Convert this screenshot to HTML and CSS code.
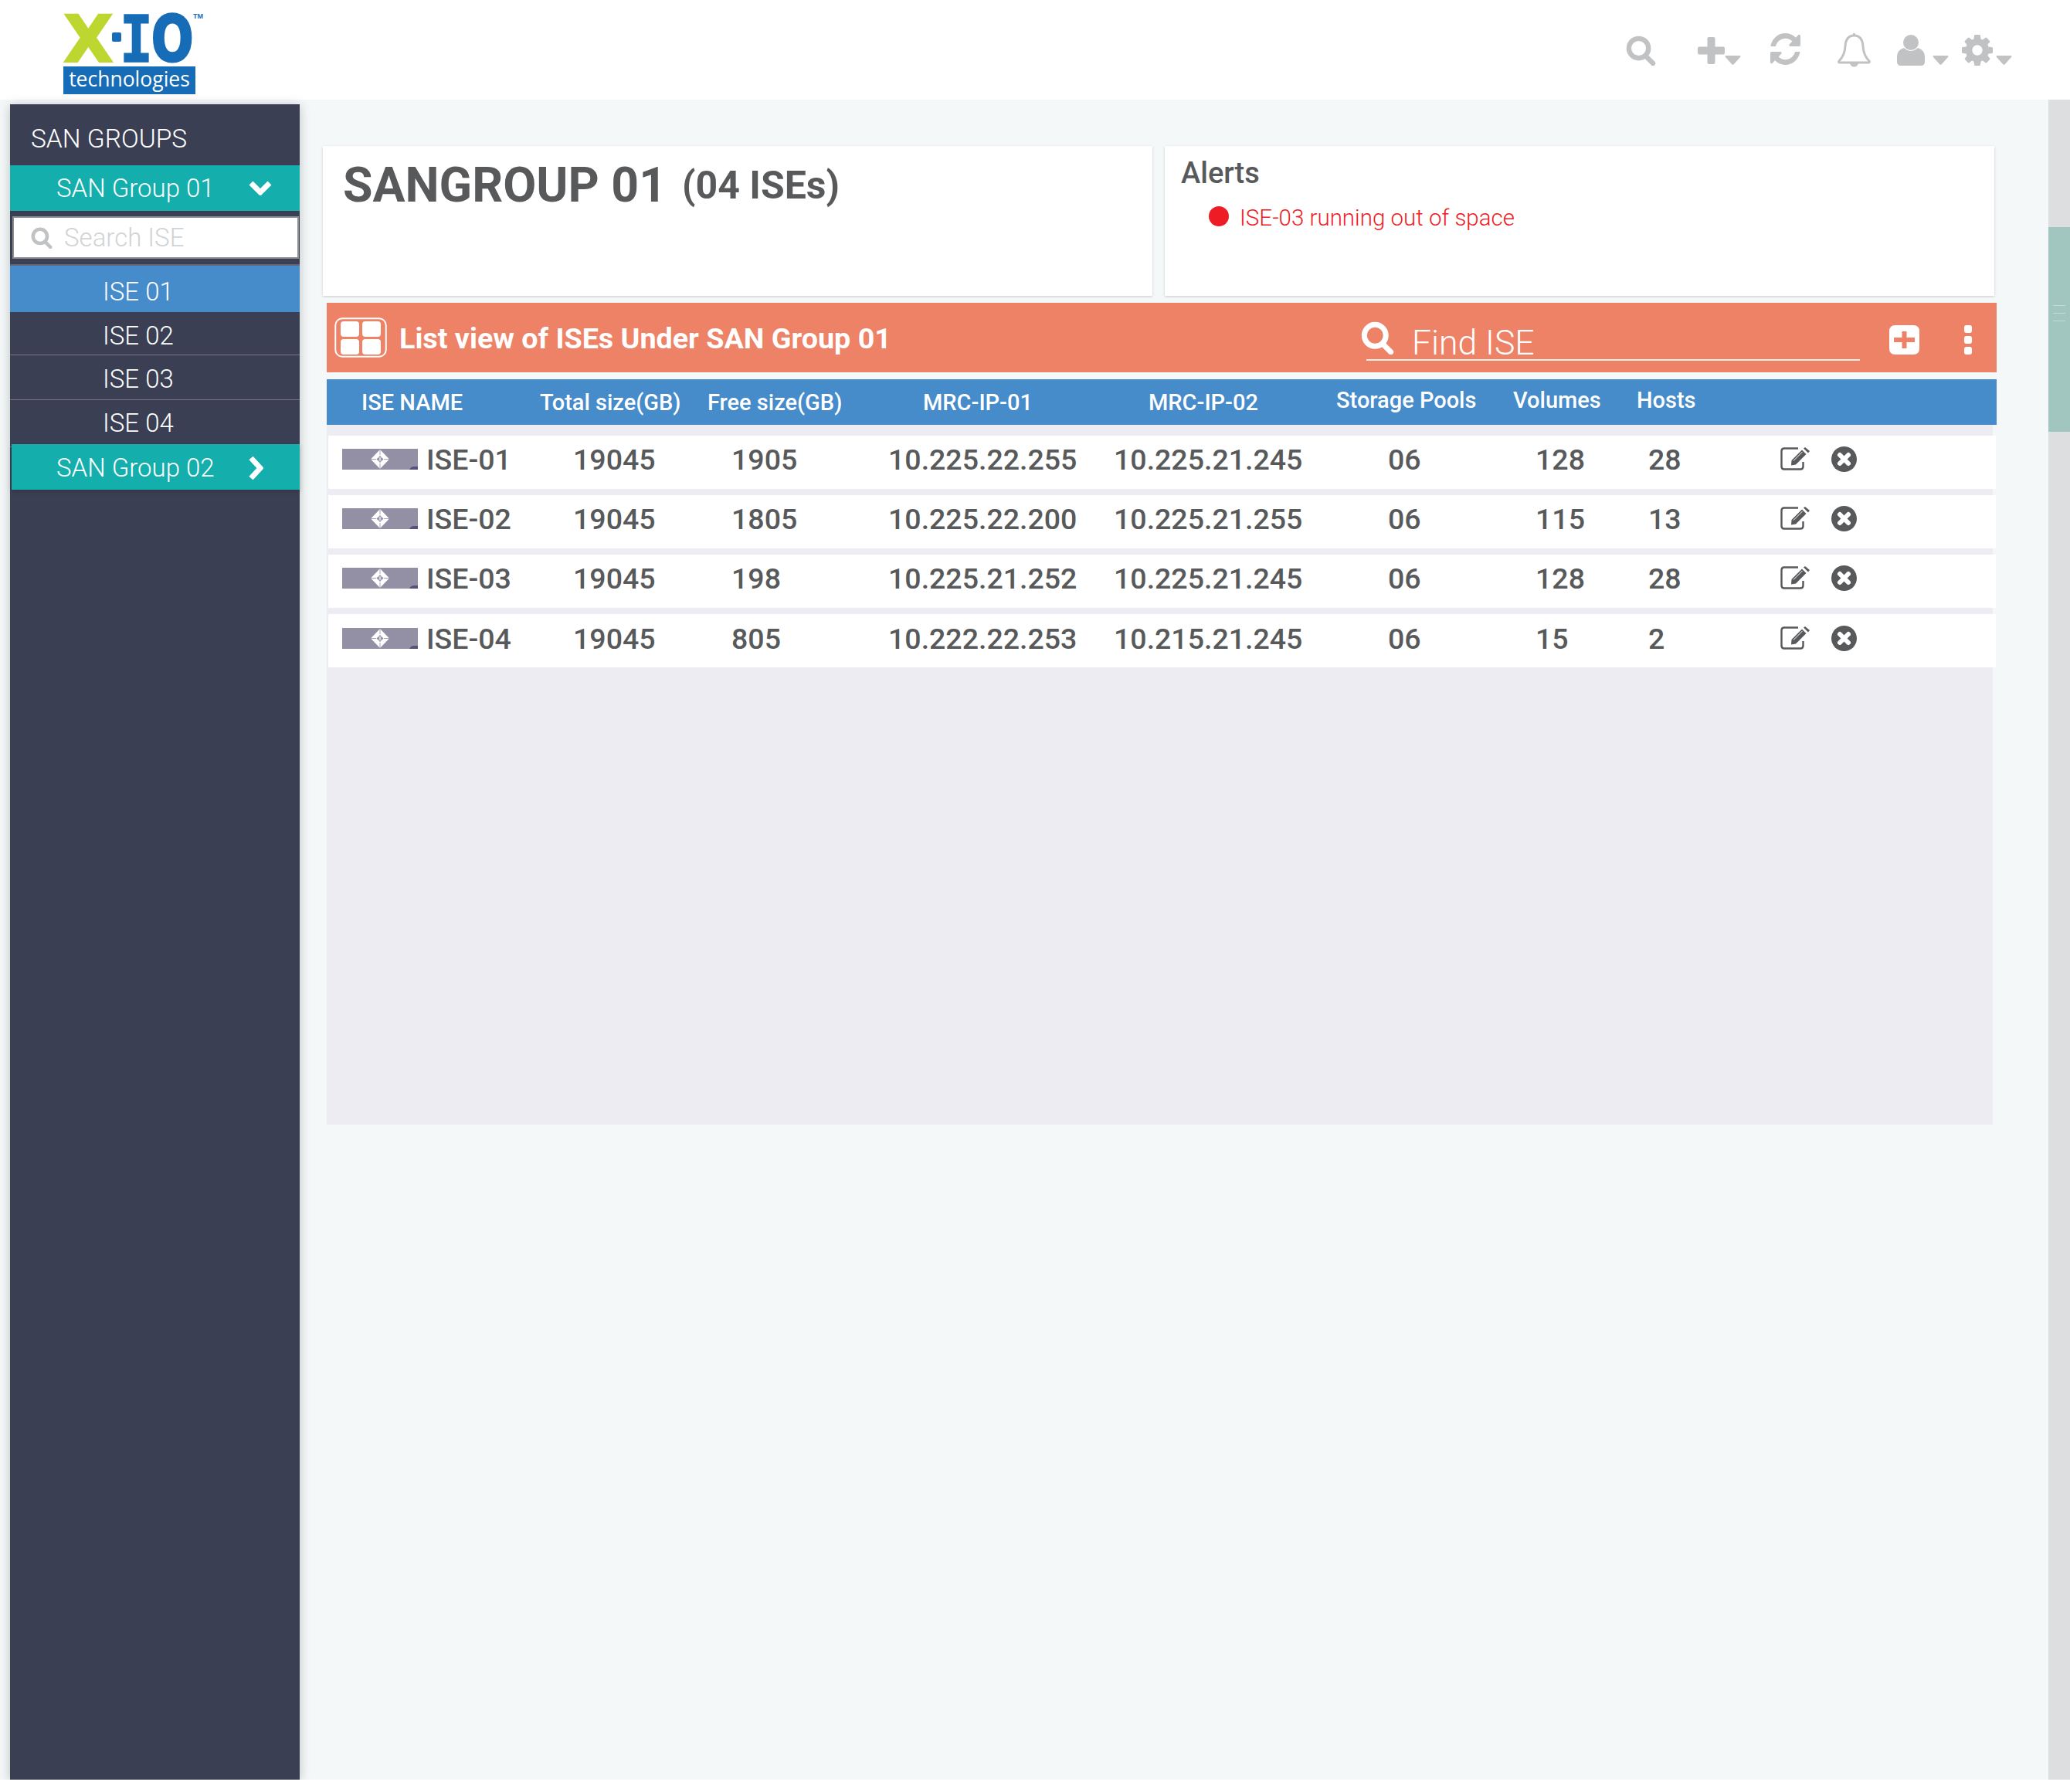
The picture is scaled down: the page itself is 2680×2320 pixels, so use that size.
FILE: index.html
```html
<!DOCTYPE html>
<html lang="en">
<head>
    <meta charset="UTF-8">
    <title>SAN Groups</title>
    <link rel="stylesheet" href="styles.css">
</head>
<body>
<svg class="defs" width="0" height="0">
    <symbol id="i-search" viewBox="0 0 40 40">
        <circle cx="17" cy="17" r="13" fill="none" stroke="currentColor" stroke-width="6.500"/>
        <path d="M26 27 L36 37" stroke="currentColor" stroke-width="6.500" stroke-linecap="round"/>
    </symbol>
    <symbol id="i-caret" viewBox="0 0 21 12">
        <path d="M1 0 H20 Q21 0 20 2 L11.5 11.5 Q10.5 12 9.5 11.5 L1 2 Q0 0 1 0 Z" fill="currentColor"/>
    </symbol>
    <symbol id="i-edit" viewBox="0 0 38 30">
        <path d="M23 1.5 H5 Q1.5 1.5 1.5 5 V25 Q1.5 28.5 5 28.5 H26 Q29.5 28.5 29.5 25 V19" fill="none" stroke="currentColor" stroke-width="2.400"/>
        <path d="M14 23.5 L14.5 17 L28 3.5 L33.5 9 L20 22.500 Z" fill="currentColor"/>
        <path d="M17 17.5 L28.5 6" stroke="#fff" stroke-width="1"/>
        <path d="M30 1.5 L32 0 L38 5 L36 7.5 Z" fill="currentColor"/>
    </symbol>
    <symbol id="i-close" viewBox="0 0 33 33">
        <circle cx="16.5" cy="16.5" r="16.5" fill="currentColor"/>
        <path d="M11 11 L22 22 M22 11 L11 22" stroke="#fff" stroke-width="6" stroke-linecap="round"/>
    </symbol>
    <symbol id="i-device" viewBox="0 0 98 27">
        <rect width="98" height="27" fill="#9390a5"/>
        <path d="M49 1 L61 13.5 L49 26 L37 13.5 Z" fill="#fff"/>
        <path d="M49 1 V8 M49 19 V26 M37 13.5 H44 M54 13.5 H61" stroke="#9390a5" stroke-width="0.800"/>
        <path d="M49 9 L53.500 13.5 L49 18 L44.500 13.5 Z" fill="#9390a5"/>
        <path d="M47.800 10.500 Q49.300 13.5 47.800 16.500 M50.200 10.500 Q48.700 13.5 50.200 16.500" fill="none" stroke="#fff" stroke-width="0.800"/>
        <path d="M87 27 Q89 23 93 23 H98 V27 Z" fill="#55537a"/>
    </symbol>
</svg>

<div class="page">
    <header class="topbar">
        <div class="logo">
            <svg class="logo-mark" width="180" height="70" viewBox="0 0 180 70">
                <text class="logo-x" transform="translate(0 64)" font-size="84">X</text>
                <rect class="logo-dot" x="63" y="26" width="12" height="12" rx="2"/>
                <text class="logo-i" transform="translate(73 64) scale(0.85 1)" font-size="84">I</text>
                <text class="logo-o" transform="translate(114 63) scale(0.78 1)" font-size="82">O</text>
                <text class="logo-tm" x="168" y="8" font-size="9">TM</text>
            </svg>
            <div class="logo-tag">technologies</div>
        </div>
        <nav class="top-icons">
            <svg class="ti ti-search"><use href="#i-search"/></svg>
            <span class="ti-group ti-plus-wrap">
                <svg class="ti-plus" viewBox="0 0 35 35"><path d="M12.500 2 Q12.500 0 14.500 0 H20.500 Q22.500 0 22.500 2 V12.500 H33 Q35 12.500 35 14.500 V20.500 Q35 22.500 33 22.500 H22.500 V33 Q22.500 35 20.500 35 H14.500 Q12.500 35 12.500 33 V22.500 H2 Q0 22.500 0 20.500 V14.500 Q0 12.500 2 12.500 H12.500 Z" fill="currentColor"/></svg>
                <svg class="caret"><use href="#i-caret"/></svg>
            </span>
            <svg class="ti-refresh" viewBox="0 0 1536 1536" preserveAspectRatio="none"><path fill="currentColor" d="M1511 928q0 5-1 7-64 268-268 434.5t-478 166.5q-146 0-282.5-55t-243.5-157l-129 129q-19 19-45 19t-45-19-19-45v-448q0-26 19-45t45-19h448q26 0 45 19t19 45-19 45l-137 137q71 66 161 102t187 36q134 0 250-65t186-179q11-17 53-117 8-23 30-23h192q13 0 22.5 9.5t9.5 22.5zm25-800v448q0 26-19 45t-45 19h-448q-26 0-45-19t-19-45 19-45l138-138q-148-137-349-137-134 0-250 65t-186 179q-11 17-53 117-8 23-30 23h-199q-13 0-22.5-9.5t-9.5-22.5v-7q65-268 270-434.5t480-166.5q146 0 284 55.5t245 156.5l130-129q19-19 45-19t45 19 19 45z"/></svg>
            <svg class="ti-bell" viewBox="0 0 43 47"><path d="M21.5 2 V5 M21.5 5 C13 5 10.500 11 10 19 C9.500 28 7 33 2 38 Q1 40 3 40 H40 Q42 40 41 38 C36 33 33.500 28 33 19 C32.500 11 30 5 21.500 5 Z" fill="none" stroke="currentColor" stroke-width="3"/><path d="M16 40 A5.500 5.500 0 0 0 27 40 Z" fill="currentColor"/></svg>
            <span class="ti-group ti-user-wrap">
                <svg class="ti-user" viewBox="0 0 36 40"><circle cx="18" cy="10" r="10" fill="currentColor"/><path d="M9 17 Q18 25 27 17 Q36 20 36 28 V35 Q36 40 31 40 H5 Q0 40 0 35 V28 Q0 20 9 17 Z" fill="currentColor"/></svg>
                <svg class="caret"><use href="#i-caret"/></svg>
            </span>
            <span class="ti-group ti-gear-wrap">
                <svg class="ti-gear" viewBox="0 0 1536 1536"><path fill="currentColor" d="M1024 768q0-106-75-181t-181-75-181 75-75 181 75 181 181 75 181-75 75-181zm512-109v222q0 12-8 23t-20 13l-185 28q-19 54-39 91 35 50 107 138 10 12 10 25t-9 23q-27 37-99 108t-94 71q-12 0-26-9l-138-108q-44 23-91 38-16 136-29 186-7 28-36 28h-222q-14 0-24.5-8.5t-11.5-21.5l-28-184q-49-16-90-37l-141 107q-10 9-25 9-14 0-25-11-126-114-165-168-7-10-7-23 0-12 8-23 15-21 51-66.5t54-70.5q-27-50-41-99l-183-27q-13-2-21-12.5t-8-23.5v-222q0-12 8-23t19-13l186-28q14-46 39-92-40-57-107-138-10-12-10-24 0-10 9-23 26-36 98.5-107.5t94.5-71.5q13 0 26 10l138 107q44-23 91-38 16-136 29-186 7-28 36-28h222q14 0 24.5 8.5t11.5 21.5l28 184q49 16 90 37l142-107q9-9 24-9 13 0 25 10 129 119 165 170 7 8 7 22 0 12-8 23-15 21-51 66.5t-54 70.5q26 50 41 98l183 28q13 2 21 12.5t8 23.5z"/></svg>
                <svg class="caret"><use href="#i-caret"/></svg>
            </span>
        </nav>
    </header>

    <div class="content">
        <aside class="sidebar">
            <div class="side-title">SAN GROUPS</div>
            <div class="group">
                <span>SAN Group 01</span>
                <svg class="chev-down" viewBox="0 0 30 19"><path d="M3 3 L15 15 L27 3" fill="none" stroke="#fff" stroke-width="7"/></svg>
            </div>
            <div class="side-search">
                <div class="side-search-box">
                    <svg class="side-search-icon"><use href="#i-search"/></svg>
                    <span>Search ISE</span>
                </div>
            </div>
            <ul class="ise-list">
                <li class="active">ISE 01</li>
                <li>ISE 02</li>
                <li>ISE 03</li>
                <li>ISE 04</li>
            </ul>
            <div class="group group-closed">
                <span>SAN Group 02</span>
                <svg class="chev-right" viewBox="0 0 19 30"><path d="M3 2 L15 15 L3 28" fill="none" stroke="#fff" stroke-width="7"/></svg>
            </div>
        </aside>

        <main class="main">
            <div class="cards">
                <section class="card card-title">
                    <h1>SANGROUP 01</h1>
                    <span class="count">(04 ISEs)</span>
                </section>
                <section class="card card-alerts">
                    <h2>Alerts</h2>
                    <div class="alert-line"><span class="dot"></span>ISE-03 running out of space</div>
                </section>
            </div>

            <div class="listbar">
                <svg class="grid-icon" viewBox="0 0 68 52">
                    <rect x="1.250" y="1.250" width="65.500" height="49.500" rx="9" fill="none" stroke="#fff" stroke-width="2"/>
                    <rect x="8" y="5" width="24" height="20" rx="4" fill="#fff"/>
                    <rect x="36" y="5" width="24" height="20" rx="4" fill="#fff"/>
                    <rect x="8" y="28" width="24" height="20" rx="4" fill="#fff"/>
                    <rect x="36" y="28" width="24" height="20" rx="4" fill="#fff"/>
                </svg>
                <div class="listbar-title">List view of ISEs Under SAN Group 01</div>
                <div class="find">
                    <svg class="find-icon"><use href="#i-search"/></svg>
                    <span>Find ISE</span>
                </div>
                <svg class="add-icon" viewBox="0 0 39 38"><path fill-rule="evenodd" fill="#fff" d="M8 0 H31 Q39 0 39 8 V30 Q39 38 31 38 H8 Q0 38 0 30 V8 Q0 0 8 0 Z M16.500 8 V16 H6 V22 H16.500 V30 H22.500 V22 H33 V16 H22.500 V8 Z"/></svg>
                <div class="more"><i></i><i></i><i></i></div>
            </div>

            <div class="thead">
                <span>ISE NAME</span>
                <span>Total size(GB)</span>
                <span>Free size(GB)</span>
                <span>MRC-IP-01</span>
                <span>MRC-IP-02</span>
                <span class="raised">Storage Pools</span>
                <span class="raised">Volumes</span>
                <span class="raised">Hosts</span>
            </div>

            <div class="rows">
                <div class="row">
                    <svg class="device"><use href="#i-device"/></svg>
                    <span>ISE-01</span><span>19045</span><span>1905</span><span>10.225.22.255</span><span>10.225.21.245</span><span>06</span><span>128</span><span>28</span>
                    <svg class="edit"><use href="#i-edit"/></svg>
                    <svg class="remove"><use href="#i-close"/></svg>
                </div>
                <div class="row">
                    <svg class="device"><use href="#i-device"/></svg>
                    <span>ISE-02</span><span>19045</span><span>1805</span><span>10.225.22.200</span><span>10.225.21.255</span><span>06</span><span>115</span><span>13</span>
                    <svg class="edit"><use href="#i-edit"/></svg>
                    <svg class="remove"><use href="#i-close"/></svg>
                </div>
                <div class="row">
                    <svg class="device"><use href="#i-device"/></svg>
                    <span>ISE-03</span><span>19045</span><span>198</span><span>10.225.21.252</span><span>10.225.21.245</span><span>06</span><span>128</span><span>28</span>
                    <svg class="edit"><use href="#i-edit"/></svg>
                    <svg class="remove"><use href="#i-close"/></svg>
                </div>
                <div class="row">
                    <svg class="device"><use href="#i-device"/></svg>
                    <span>ISE-04</span><span>19045</span><span>805</span><span>10.222.22.253</span><span>10.215.21.245</span><span>06</span><span>15</span><span>2</span>
                    <svg class="edit"><use href="#i-edit"/></svg>
                    <svg class="remove"><use href="#i-close"/></svg>
                </div>
            </div>
        </main>

        <div class="scrollbar">
            <div class="scroll-thumb"><i></i><i></i><i></i></div>
        </div>
    </div>
</div>
</body>
</html>
```
FILE: styles.css
```css
body {
    margin: 0;
    background: #fff;
    font-family: Roboto, "Liberation Sans", sans-serif;
    color: #58595b;
}
.defs {
    position: absolute;
}
.page {
    height: 2304px;
    display: flex;
    flex-direction: column;
    background: #f4f8f9;
}

/* top bar */
.topbar {
    height: 129px;
    flex: none;
    display: flex;
    justify-content: space-between;
    background: #fff;
}
.logo {
    margin-left: 82px;
    padding-top: 16px;
    width: 180px;
}
.logo-mark {
    display: block;
    height: 70px;
    overflow: visible;
}
.logo-x {
    font-family: "DejaVu Sans";
    font-weight: 700;
    fill: #bdd630;
    stroke: #bdd630;
    stroke-width: 2;
}
.logo-dot {
    fill: #166cb6;
}
.logo-i {
    font-family: "DejaVu Sans Mono";
    font-weight: 700;
    fill: #166cb6;
    stroke: #166cb6;
    stroke-width: 1.5;
}
.logo-o {
    font-family: "DejaVu Sans";
    font-weight: 700;
    fill: #166cb6;
    stroke: #166cb6;
    stroke-width: 3;
}
.logo-tm {
    font-family: "Liberation Sans";
    font-weight: 700;
    fill: #166cb6;
}
.logo-tag {
    width: 171px;
    height: 36px;
    background: #166cb6;
    color: #fff;
    font-family: "Open Sans", sans-serif;
    font-size: 26.500px;
    line-height: 32px;
    text-align: center;
}
.top-icons {
    display: flex;
    align-items: flex-start;
    color: #c1c2c4;
    padding-right: 75px;
}
.ti-search {
    width: 39px;
    height: 39px;
    margin-top: 46px;
}
.ti-group {
    display: flex;
    align-items: flex-start;
}
.ti-plus-wrap {
    margin-left: 54px;
    margin-top: 48px;
}
.ti-plus {
    width: 35px;
    height: 35px;
}
.caret {
    width: 21px;
    height: 12px;
    margin-top: 24px;
}
.ti-refresh {
    width: 39px;
    height: 41px;
    margin-left: 38px;
    margin-top: 43px;
}
.ti-bell {
    width: 43px;
    height: 47px;
    margin-left: 48px;
    margin-top: 41px;
}
.ti-user-wrap {
    margin-left: 34px;
    margin-top: 45px;
}
.ti-user {
    width: 36px;
    height: 40px;
}
.ti-user-wrap .caret {
    margin-left: 10px;
    margin-top: 27px;
}
.ti-gear-wrap {
    margin-left: 17px;
    margin-top: 45px;
}
.ti-gear {
    width: 40px;
    height: 40px;
}
.ti-gear-wrap .caret {
    margin-left: 4px;
    margin-top: 27px;
}

/* layout */
.content {
    flex: 1;
    display: flex;
    min-height: 0;
}

/* sidebar */
.sidebar {
    width: 375px;
    flex: none;
    margin: 6px 0 0 13px;
    background: #3b3f54;
    color: #fff;
    font-size: 33px;
    font-weight: 300;
    box-shadow: 0 2px 14px rgba(0, 0, 0, 0.22);
}
.side-title {
    height: 79px;
    box-sizing: border-box;
    padding: 9px 0 0 27px;
    display: flex;
    align-items: center;
    font-size: 33.500px;
}
.group {
    height: 59px;
    padding-left: 60px;
    display: flex;
    align-items: center;
    background: #14aeac;
}
.chev-down {
    width: 30px;
    height: 19px;
    margin-left: auto;
    margin-right: 36px;
}
.group-closed {
    margin: -4px 0 0 2px;
    padding: 2px 0 0 58px;
    height: 57px;
    box-shadow: 0 2px 6px rgba(0, 0, 0, 0.2);
}
.chev-right {
    width: 19px;
    height: 30px;
    margin-left: auto;
    margin-right: 47px;
}
.side-search {
    height: 71px;
    padding: 7px 1px 0 3px;
    box-sizing: border-box;
    border-bottom: 2px solid #62657a;
}
.side-search-box {
    height: 55px;
    box-sizing: border-box;
    border: 2px solid #8c8d93;
    background: #fff;
    display: flex;
    align-items: center;
    padding-left: 22px;
    color: #d1d3d4;
}
.side-search-icon {
    width: 28px;
    height: 28px;
    color: #c1c2c4;
    margin-right: 15px;
}
.ise-list {
    list-style: none;
    margin: 0;
    padding: 0;
}
.ise-list li {
    height: 58px;
    box-sizing: border-box;
    padding-left: 120px;
    padding-top: 4px;
    display: flex;
    align-items: center;
    border-bottom: 1px solid #73757f;
}
.ise-list li.active {
    height: 60px;
    padding-top: 6px;
    background: #468bca;
    border-bottom: 0;
}
.ise-list li:nth-child(2) {
    height: 56px;
    padding-top: 5px;
}
.ise-list li:nth-child(4) {
    height: 61px;
    padding-top: 0;
    padding-bottom: 2px;
}

/* main area */
.main {
    flex: 1;
    min-width: 0;
    padding: 60px 70px 0 30px;
}
.cards {
    display: flex;
    gap: 16px;
}
.card {
    flex: 1;
    height: 194px;
    box-sizing: border-box;
    background: #fff;
    box-shadow: 0 1px 3px rgba(0, 0, 0, 0.18);
}
.card-title {
    display: flex;
    align-items: flex-start;
    padding-top: 15px;
}
.card-title h1 {
    margin: 0 0 0 26px;
    font-size: 62.500px;
    line-height: 72px;
    font-weight: 700;
}
.count {
    margin: 5px 0 0 20px;
    font-size: 50px;
    line-height: 62px;
    font-weight: 700;
}
.card-alerts {
    padding-top: 12px;
}
.card-alerts h2 {
    margin: 0 0 0 21px;
    font-size: 38px;
    line-height: 46px;
    font-weight: 500;
}
.alert-line {
    display: flex;
    align-items: center;
    margin: 17px 0 0 57px;
    color: #ee1c25;
    font-size: 29.500px;
    line-height: 36px;
    font-weight: 300;
}
.dot {
    width: 26px;
    height: 26px;
    margin: 0 14px 4px 0;
    border-radius: 50%;
    background: #ee1c25;
}

.listbar {
    height: 90px;
    margin: 9px -3px 0 5px;
    display: flex;
    align-items: center;
    background: #ed8267;
    color: #fff;
    padding-left: 10px;
}
.grid-icon {
    width: 68px;
    height: 52px;
    flex: none;
}
.listbar-title {
    width: 1245px;
    margin-left: 16px;
    padding-top: 2px;
    font-size: 37.700px;
    font-weight: 700;
    white-space: nowrap;
}
.find {
    width: 639px;
    height: 47px;
    margin-left: 7px;
    margin-top: 11px;
    border-bottom: 2px solid #fdeee9;
    display: flex;
    align-items: flex-end;
    font-size: 44.500px;
    font-weight: 300;
    line-height: 42px;
}
.find-icon {
    width: 43px;
    height: 43px;
    margin: 0 23px 6px -7px;
    flex: none;
}
.add-icon {
    width: 39px;
    height: 38px;
    margin-left: 38px;
    margin-top: 6px;
    flex: none;
}
.more {
    margin-left: 58px;
    margin-top: 6px;
    display: flex;
    flex-direction: column;
    gap: 4px;
}
.more i {
    display: block;
    width: 10px;
    height: 10px;
    border-radius: 3px;
    background: #fff;
}

.thead {
    height: 59px;
    margin: 9px -3px 0 5px;
    display: grid;
    grid-template-columns: 231px 217px 279px 292px 243px 229px 160px 1fr;
    align-items: center;
    padding-left: 45px;
    background: #468bca;
    color: #fff;
    font-size: 29px;
    font-weight: 500;
}
.thead span {
    white-space: nowrap;
}
.thead .raised {
    margin-bottom: 5px;
}
.rows {
    height: 906px;
    box-sizing: border-box;
    margin: 0 2px 0 5px;
    padding-top: 14px;
    background: #edecf2;
    display: flex;
    flex-direction: column;
    gap: 8px;
}
.row {
    height: 69px;
    box-sizing: border-box;
    margin: 0 -4px 0 2px;
    padding: 0 0 8px 18px;
    display: grid;
    grid-template-columns: 109px 190px 205px 203px 292px 355px 191px 146px 171px 66px 1fr;
    align-items: center;
    background: #fff;
    font-size: 37.500px;
    font-weight: 500;
}
.row span {
    white-space: nowrap;
}
.row:last-child {
    padding-bottom: 6px;
}
.device {
    width: 98px;
    height: 27px;
}
.edit {
    width: 38px;
    height: 30px;
    margin-bottom: 2px;
    color: #58595b;
}
.remove {
    width: 33px;
    height: 33px;
    color: #58595b;
}

/* fake scrollbar */
.scrollbar {
    width: 28px;
    flex: none;
    background: #dcdee0;
}
.scroll-thumb {
    height: 265px;
    margin-top: 165px;
    background: #a0c6bf;
    box-sizing: border-box;
    padding: 101px 6px 0;
}
.scroll-thumb i {
    display: block;
    height: 1px;
    margin-bottom: 9px;
    background: #c4dcd8;
}
```
